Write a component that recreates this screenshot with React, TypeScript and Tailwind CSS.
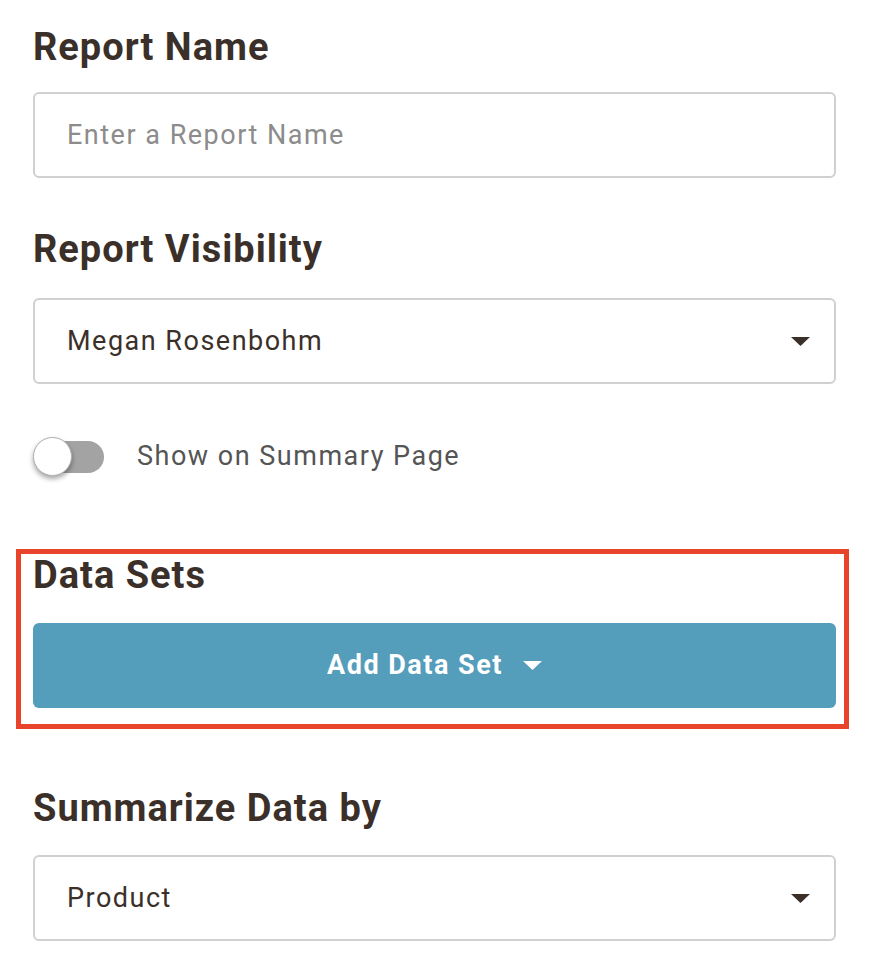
import { useState } from "react";

const font = { fontFamily: "Roboto, 'Liberation Sans', sans-serif" };

function Caret({ className }: { className: string }) {
  return (
    <svg width="19" height="9" viewBox="0 0 19 9" className={className}>
      <path d="M0 0 H19 L9.5 9 Z" fill="currentColor" />
    </svg>
  );
}

function Heading({ children }: { children: string }) {
  return (
    <h2 className="h-[42px] text-[38px] font-bold leading-[42px] tracking-[1px] text-[#3b3029]">{children}</h2>
  );
}

function SelectBox({ value }: { value: string }) {
  return (
    <div className="flex h-[86px] items-center justify-between rounded-[6px] border-2 border-[#d0d0d0] bg-white pl-[32px] pr-[24px]">
      <span className="text-[27px] tracking-[1.5px] text-[#3b3029]">{value}</span>
      <Caret className="text-[#3b3029]" />
    </div>
  );
}

export default function App() {
  const [name, setName] = useState("");
  const [onSummary, setOnSummary] = useState(false);

  return (
    <div className="min-h-[970px] w-[872px] bg-white pl-[33px] pt-[26px]" style={font}>
      <div className="w-[803px]">
        <Heading>Report Name</Heading>
        <input
          value={name}
          onChange={(e) => setName(e.target.value)}
          placeholder="Enter a Report Name"
          className="mt-[24px] block h-[86px] w-full rounded-[6px] border-2 border-[#d0d0d0] px-[32px] text-[27px] tracking-[1.5px] text-[#3b3029] outline-none placeholder:text-[#8c8c8c]"
        />

        <div className="mt-[50px]">
          <Heading>Report Visibility</Heading>
        </div>
        <div className="mt-[28px]">
          <SelectBox value="Megan Rosenbohm" />
        </div>

        <div className="mt-[53px] flex h-[39px] items-center">
          <button
            onClick={() => setOnSummary(!onSummary)}
            className="relative h-[39px] w-[71px]"
          >
            <span className="absolute left-[4px] top-[4px] h-[32px] w-[67px] rounded-full bg-[#a3a3a3]" />
            <span className="absolute left-0 top-0 h-[39px] w-[39px] rounded-full border border-[#b0b0b0] bg-white shadow-[0_3px_5px_rgba(0,0,0,0.35)]" />
          </button>
          <span className="ml-[33px] text-[27px] tracking-[1.5px] text-[#555]">Show on Summary Page</span>
        </div>

        <div className="-ml-[17px] -mr-[13px] mt-[73px] border-[5px] border-[#e8432b] pb-[16px] pl-[12px] pr-[8px]">
          <Heading>Data Sets</Heading>
          <button className="mt-[27px] flex h-[85px] w-full items-center justify-center gap-[20px] rounded-[6px] bg-[#549dbb]">
            <span className="text-[27px] font-bold tracking-[1.5px] text-white">Add Data Set</span>
            <Caret className="text-white" />
          </button>
        </div>

        <div className="mt-[58px]">
          <Heading>Summarize Data by</Heading>
        </div>
        <div className="mt-[26px]">
          <SelectBox value="Product" />
        </div>
      </div>
    </div>
  );
}
